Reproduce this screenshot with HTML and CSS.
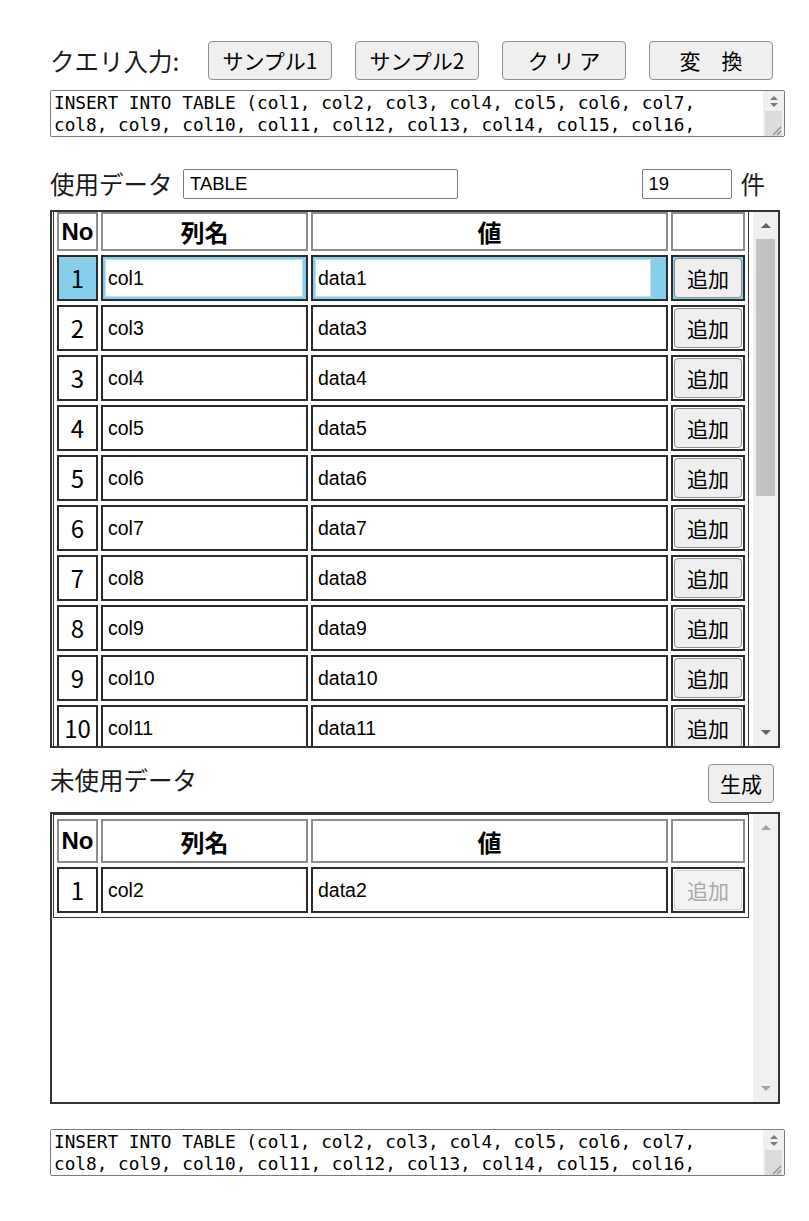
FILE: index.html
```html
<!DOCTYPE html>
<html lang="ja">
<head>
<meta charset="utf-8">
<title>クエリ変換</title>
<link rel="stylesheet" href="styles.css">
</head>
<body>
<div class="page">
  <div class="toolbar">
    <span class="label q-label">クエリ入力:</span>
    <button class="btn tb-btn">サンプル1</button>
    <button class="btn tb-btn">サンプル2</button>
    <button class="btn tb-btn">ク リ ア</button>
    <button class="btn tb-btn">変　換</button>
  </div>

  <div class="sqlbox">
    <textarea class="sql" wrap="off" readonly>INSERT INTO TABLE (col1, col2, col3, col4, col5, col6, col7,
col8, col9, col10, col11, col12, col13, col14, col15, col16,
col17, col18, col19, col20) VALUES ('data1', 'data2', 'data3',
'data4', 'data5', 'data6', 'data7', 'data8', 'data9', 'data10');</textarea>
    <div class="tscroll">
      <div class="tbtns"><span class="ttri up"></span><span class="ttri down"></span></div>
      <div class="tthumb">
        <svg class="grip" width="12" height="12" viewBox="0 0 12 12"><path d="M11 3 L3 11 M11 7 L7 11" stroke="#8a8a8a" stroke-width="1.2" fill="none"/></svg>
      </div>
    </div>
  </div>

  <div class="datahead">
    <span class="label used-label">使用データ</span>
    <input class="field tname" value="TABLE">
    <input class="field count" value="19">
    <span class="label unit">件</span>
  </div>

  <div class="grid used">
    <div class="viewport">
      <table class="dtable">
        <thead>
          <tr><th class="c-no">No</th><th class="c-name">列名</th><th class="c-val">値</th><th class="c-btn"></th></tr>
        </thead>
        <tbody>
          <tr class="sel"><td class="no">1</td><td><input class="ci ci-name" value="col1"></td><td><input class="ci ci-val" value="data1"></td><td class="bc"><button class="btn add">追加</button></td></tr>
          <tr><td class="no">2</td><td><input class="ci ci-name" value="col3"></td><td><input class="ci ci-val" value="data3"></td><td class="bc"><button class="btn add">追加</button></td></tr>
          <tr><td class="no">3</td><td><input class="ci ci-name" value="col4"></td><td><input class="ci ci-val" value="data4"></td><td class="bc"><button class="btn add">追加</button></td></tr>
          <tr><td class="no">4</td><td><input class="ci ci-name" value="col5"></td><td><input class="ci ci-val" value="data5"></td><td class="bc"><button class="btn add">追加</button></td></tr>
          <tr><td class="no">5</td><td><input class="ci ci-name" value="col6"></td><td><input class="ci ci-val" value="data6"></td><td class="bc"><button class="btn add">追加</button></td></tr>
          <tr><td class="no">6</td><td><input class="ci ci-name" value="col7"></td><td><input class="ci ci-val" value="data7"></td><td class="bc"><button class="btn add">追加</button></td></tr>
          <tr><td class="no">7</td><td><input class="ci ci-name" value="col8"></td><td><input class="ci ci-val" value="data8"></td><td class="bc"><button class="btn add">追加</button></td></tr>
          <tr><td class="no">8</td><td><input class="ci ci-name" value="col9"></td><td><input class="ci ci-val" value="data9"></td><td class="bc"><button class="btn add">追加</button></td></tr>
          <tr><td class="no">9</td><td><input class="ci ci-name" value="col10"></td><td><input class="ci ci-val" value="data10"></td><td class="bc"><button class="btn add">追加</button></td></tr>
          <tr><td class="no">10</td><td><input class="ci ci-name" value="col11"></td><td><input class="ci ci-val" value="data11"></td><td class="bc"><button class="btn add">追加</button></td></tr>
        </tbody>
      </table>
    </div>
    <div class="vscroll">
      <div class="sb-btn"><span class="tri up"></span></div>
      <div class="sb-track"><div class="sb-thumb"></div></div>
      <div class="sb-btn"><span class="tri down"></span></div>
    </div>
  </div>

  <div class="unhead">
    <span class="label unused-label">未使用データ</span>
    <button class="btn gen">生成</button>
  </div>

  <div class="grid unused">
    <div class="viewport">
      <table class="dtable">
        <thead>
          <tr><th class="c-no">No</th><th class="c-name">列名</th><th class="c-val">値</th><th class="c-btn"></th></tr>
        </thead>
        <tbody>
          <tr><td class="no">1</td><td><input class="ci ci-name" value="col2"></td><td><input class="ci ci-val" value="data2"></td><td class="bc"><button class="btn add" disabled>追加</button></td></tr>
        </tbody>
      </table>
    </div>
    <div class="vscroll off">
      <div class="sb-btn"><span class="tri up"></span></div>
      <div class="sb-track"></div>
      <div class="sb-btn"><span class="tri down"></span></div>
    </div>
  </div>

  <div class="sqlbox out">
    <textarea class="sql" wrap="off" readonly>INSERT INTO TABLE (col1, col2, col3, col4, col5, col6, col7,
col8, col9, col10, col11, col12, col13, col14, col15, col16,
col17, col18, col19, col20) VALUES ('data1', 'data2', 'data3',
'data4', 'data5', 'data6', 'data7', 'data8', 'data9', 'data10');</textarea>
    <div class="tscroll">
      <div class="tbtns"><span class="ttri up"></span><span class="ttri down"></span></div>
      <div class="tthumb">
        <svg class="grip" width="12" height="12" viewBox="0 0 12 12"><path d="M11 3 L3 11 M11 7 L7 11" stroke="#8a8a8a" stroke-width="1.2" fill="none"/></svg>
      </div>
    </div>
  </div>
</div>
</body>
</html>
```

FILE: styles.css
```css
* { box-sizing: border-box; }

html, body {
  margin: 0;
  background: #ffffff;
}

body {
  font-family: "Noto Sans CJK JP", "Liberation Sans", sans-serif;
  color: #000;
}

.page {
  padding: 41px 0 0 50px;
  width: 809px;
}

.label {
  font-size: 24.5px;
  line-height: 30px;
  font-weight: 400;
  color: #1a1a1a;
  white-space: nowrap;
}

/* toolbar */
.toolbar {
  display: flex;
  align-items: center;
  height: 39px;
}
.q-label { width: 158px; }

.btn {
  font-family: "Noto Sans CJK JP", sans-serif;
  font-size: 21px;
  line-height: 1;
  color: #000;
  background: #efefef;
  border: 1px solid #8f8f8f;
  border-radius: 4px;
  padding: 0;
  display: inline-flex;
  align-items: center;
  justify-content: center;
}
.tb-btn {
  width: 124px;
  height: 39px;
  margin-right: 23px;
}

/* sql text boxes */
.sqlbox {
  margin-top: 10px;
  width: 735px;
  height: 47px;
  border: 1px solid #7a7a7a;
  border-radius: 2px;
  display: flex;
  overflow: hidden;
}
.sqlbox.out { margin-top: 25px; }

.sql {
  flex: 1;
  margin: 0;
  border: 0;
  outline: none;
  resize: none;
  overflow: hidden;
  padding: 2px 3px 0;
  font-family: "DejaVu Sans Mono", "Liberation Mono", monospace;
  font-size: 17.75px;
  line-height: 21.5px;
  color: #000;
  background: #fff;
}

.tscroll {
  width: 21px;
  display: flex;
  flex-direction: column;
  background: #f0f0f0;
}
.tbtns {
  height: 20px;
  display: flex;
  flex-direction: column;
  align-items: center;
  justify-content: center;
  gap: 3px;
}
.ttri {
  width: 0;
  height: 0;
  border-left: 4px solid transparent;
  border-right: 4px solid transparent;
}
.ttri.up { border-bottom: 4px solid #7a7a7a; }
.ttri.down { border-top: 4px solid #7a7a7a; }
.tthumb {
  flex: 1;
  margin: 0 2px;
  background: #dcdcdc;
  display: flex;
  align-items: flex-end;
  justify-content: flex-end;
}
.grip { display: block; }

/* data header row */
.datahead {
  margin-top: 32px;
  width: 715px;
  height: 30px;
  display: flex;
  align-items: center;
}
.used-label { width: 122px; }

.field {
  height: 30px;
  border: 1px solid #7a7a7a;
  border-radius: 2px;
  font-family: "Liberation Sans", sans-serif;
  font-size: 18.5px;
  padding: 0 6px;
  color: #000;
  background: #fff;
}
.tname { width: 275px; margin-left: 11px; }
.count { width: 90px; margin-left: auto; }
.unit { margin-left: 9px; }

/* grids */
.grid {
  width: 730px;
  border: 2px solid #333;
  display: flex;
}
.grid.used { margin-top: 11px; height: 538px; }
.grid.unused { margin-top: 9px; height: 292px; }

.viewport {
  flex: 1;
  overflow: hidden;
}

.dtable {
  margin-left: 1px;
  width: 696px;
  table-layout: fixed;
  border-collapse: separate;
  border-spacing: 3px 4px;
  border: 1px solid #333;
}
.used .dtable { margin-top: -5px; }

.dtable th {
  border: 2px solid #8c8c8c;
  padding: 0;
  font-family: "Liberation Sans", "Noto Sans CJK JP", sans-serif;
  font-size: 24px;
  font-weight: 700;
  text-align: center;
  vertical-align: middle;
}
.used .dtable thead tr { height: 39px; }
.unused .dtable thead tr { height: 44px; }

.c-no { width: 41px; }
.c-name { width: 207px; }
.c-val { width: 357px; }
.c-btn { width: 74px; }

.dtable tbody tr { height: 46px; }
.dtable td {
  border: 2px solid #2b2b2b;
  padding: 2px;
  vertical-align: middle;
  background: #fff;
}
.dtable td.no {
  text-align: center;
  font-family: "Noto Sans CJK JP", sans-serif;
  font-size: 24px;
  line-height: 1;
  padding: 0;
}
.dtable td.bc { padding: 1px; }

.ci {
  display: block;
  height: 38px;
  border: 1px solid #fff;
  padding: 0 2px;
  margin: 0;
  font-family: "Liberation Sans", sans-serif;
  font-size: 19.5px;
  color: #000;
  background: #fff;
  outline: none;
}
.ci-name { width: 198px; }
.ci-val { width: 336px; }

tr.sel td { background: #87ceeb; }
tr.sel .ci { border-color: #b7e3f3; }

.add {
  width: 68px;
  height: 40px;
}
.add:disabled {
  color: #a8a8a8;
  border-color: #cfcfcf;
  background: #f3f3f3;
}

/* fake scrollbars */
.vscroll {
  width: 25px;
  background: #f0f0f0;
  display: flex;
  flex-direction: column;
}
.sb-btn {
  height: 27px;
  display: flex;
  align-items: center;
  justify-content: center;
}
.sb-track {
  flex: 1;
  padding: 0 3px;
}
.sb-thumb {
  height: 257px;
  background: #c1c1c1;
}
.tri {
  width: 0;
  height: 0;
  border-left: 5px solid transparent;
  border-right: 5px solid transparent;
}
.tri.up { border-bottom: 5px solid #606060; }
.tri.down { border-top: 5px solid #606060; }
.vscroll.off .tri.up { border-bottom-color: #a3a3a3; }
.vscroll.off .tri.down { border-top-color: #a3a3a3; }

/* unused header */
.unhead {
  margin-top: 16px;
  width: 724px;
  height: 39px;
  display: flex;
  align-items: center;
  justify-content: space-between;
}
.unused-label { margin-top: -8px; }
.gen {
  width: 66px;
  height: 39px;
}
```
